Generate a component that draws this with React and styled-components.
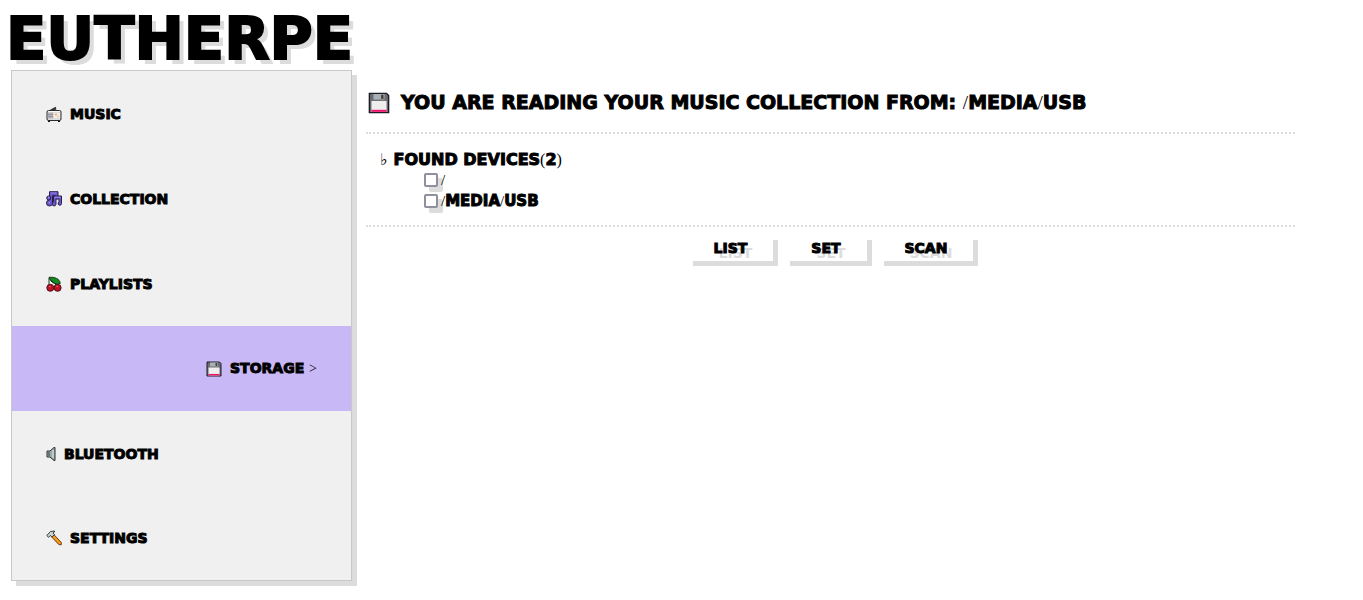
import React from 'react';
import styled, { createGlobalStyle } from 'styled-components';

const Global = createGlobalStyle`
  * { box-sizing: border-box; }
  body { margin: 0; background: #fff; color: #000; font-family: "DejaVu Sans", sans-serif; font-weight: 700; }
`;

const Page = styled.div`
  padding: 8px 8px 20px 11px;
`;

const Title = styled.h1`
  margin: 0 0 0 -5px;
  font-size: 59px;
  line-height: 62px;
  -webkit-text-stroke: 2px #000;
  text-shadow: 5px 5px #dcdcdc;
`;

const Columns = styled.div`
  display: flex;
  align-items: flex-start;
  gap: 14px;
`;

const Menu = styled.nav`
  flex: 0 0 calc(25% + 5px);
  display: flex;
  flex-direction: column;
  border: 1px solid #c8c8c8;
  background: #f0f0f0;
  box-shadow: 5px 5px #dcdcdc;
`;

const MenuLink = styled.a`
  display: flex;
  align-items: center;
  justify-content: ${p => (p.$active ? 'flex-end' : 'flex-start')};
  gap: 8px;
  height: 85px;
  padding: 0 34px;
  background: ${p => (p.$active ? '#c8b8f6' : 'transparent')};
  color: #000;
  font-size: 14px;
  line-height: 16px;
  -webkit-text-stroke: 1px #000;
  text-decoration: none;
  &:last-child { height: 84px; }
`;

const Icon = styled.svg`
  flex: none;
  display: block;
  overflow: visible;
`;

const Thin = styled.span`
  font-family: "Liberation Serif", serif;
  font-weight: 400;
  -webkit-text-stroke: 0;
`;

const Main = styled.main`
  flex: 1;
  min-width: 0;
  margin-right: 60px;
`;

const Heading = styled.h2`
  display: flex;
  align-items: center;
  gap: 11px;
  margin: 0;
  padding: 20px 2px 17px;
  font-size: 19px;
  line-height: 24px;
  -webkit-text-stroke: 1px #000;
`;

const Panel = styled.section`
  padding: 15px 14px 13px;
  border-top: 2px dotted #dcdcdc;
  border-bottom: 2px dotted #dcdcdc;
`;

const PanelTitle = styled.h3`
  margin: 0;
  font-size: 16px;
  line-height: 21px;
  -webkit-text-stroke: 1px #000;
`;

const Devices = styled.ul`
  margin: 0;
  padding: 0 0 0 44px;
  list-style: none;
`;

const Device = styled.li`
  height: 21px;
  font-size: 15px;
  line-height: 20px;
  -webkit-text-stroke: 1px #000;
`;

const DeviceLabel = styled.label`
  display: flex;
  align-items: center;
  gap: 3px;
`;

const Tick = styled.input`
  appearance: none;
  flex: none;
  width: 14px;
  height: 14px;
  margin: 0;
  border: 2px solid #8f8f9d;
  border-radius: 2px;
  background: #fff;
  box-shadow: 5px 5px #dcdcdc;
  &:checked { background: #8f8f9d; }
`;

const Actions = styled.div`
  display: flex;
  justify-content: center;
  gap: 12px;
  padding: 8px 0;
`;

const Action = styled.button`
  height: 26px;
  padding: 0 26px;
  border: 0;
  background: #fff;
  color: #000;
  font: 700 14px/26px "DejaVu Sans", sans-serif;
  -webkit-text-stroke: 1px #000;
  text-shadow: 5px 5px #dcdcdc;
  box-shadow: 5px 5px #dcdcdc;
`;

const Radio = () => (
  <Icon width="16" height="16" viewBox="0 0 16 16" aria-hidden="true">
    <path d="M4.500 4.500 10 1.500M7.500 4 10 2.500" stroke="#333" strokeWidth="1.6" fill="none" />
    <rect x="1" y="4.5" width="14" height="10" rx="1.5" fill="#dcdcdc" stroke="#2b2b33" />
    <path d="M2 5.500h12" stroke="#f6f6f6" />
    <path d="M2 6.500h5v6H2z" fill="#b4b4b8" />
    <path d="M2 8.500h5M2 10.500h5" stroke="#96969c" />
    <rect x="8" y="7" width="6" height="5" fill="#f2ece6" />
    <path d="M9 8.500h2M11.500 10.500h1" stroke="#f2a45a" strokeWidth="1.4" />
    <path d="M2 15.200h2M12 15.200h2" stroke="#111" strokeWidth="1.4" />
  </Icon>
);

const Notes = () => (
  <Icon width="16" height="16" viewBox="0 0 16 16" aria-hidden="true">
    <g fill="#6f58cb" stroke="#28204a" strokeWidth="1">
      <path d="M3.500.7h8.500v7H9V4.500H6.500V12a3 3 0 1 1-3-3z" />
      <circle cx="2.700" cy="7" r="2" />
      <path d="M7.500 5h8v7.500a1.700 1.700 0 1 1-2.500-1.500V8H10v5a1.900 1.900 0 1 1-2.500-1.800z" />
    </g>
    <circle cx="3.800" cy="12" r="2.300" fill="#6a55c4" />
    <path d="M4.500 2h6M8.500 6.300h6" stroke="#8f80e6" strokeWidth="1.200" />
    <path d="M2 6.500h1.500M2.500 11.500h1.500" stroke="#9c93ed" strokeWidth="1.500" />
  </Icon>
);

const Cherries = () => (
  <Icon width="16" height="16" viewBox="0 0 16 16" aria-hidden="true">
    <path d="M3 1.300C8 .8 14 2.500 14.200 7.500 9 8.500 5 7 3 1.300z" fill="#138a20" stroke="#143a18" />
    <path d="M3 2v8M4 3l7 7" stroke="#143a18" fill="none" />
    <circle cx="4.300" cy="11.800" r="3.500" fill="#bf1024" stroke="#4b1017" />
    <circle cx="11.600" cy="11.800" r="3.500" fill="#bf1024" stroke="#4b1017" />
    <path d="M3 10.500h1.500M10.500 10.500H12" stroke="#ef6972" />
  </Icon>
);

const Floppy = ({ size }) => (
  <Icon width={size} height={size} viewBox="0 0 16 16" aria-hidden="true">
    <path d="M1 1h12.500L15 2.500V15H1z" fill="#6c6c72" stroke="#1c1c24" />
    <path d="M4 1.500h8v4H4z" fill="#a9b1b8" />
    <path d="M9.500 2h1.800v3H9.500z" fill="#4a4038" />
    <path d="M2.500 6.500h11v8h-11z" fill="#eee" />
    <path d="M2.500 13.700h11" stroke="#f0126c" strokeWidth="1.500" />
  </Icon>
);

const Speaker = () => (
  <Icon width="10" height="16" viewBox="0 0 10 16" aria-hidden="true">
    <path d="M1 5h3l4-3.500h1v13H8L4 11H1z" fill="#9eaaaa" stroke="#293033" />
    <path d="M1.500 5.500h2.500v5H1.500z" fill="#66757a" />
    <path d="M7 4v8" stroke="#d3dcd5" strokeWidth="1.3" />
  </Icon>
);

const Hammer = () => (
  <Icon width="16" height="16" viewBox="0 0 16 16" aria-hidden="true">
    <path d="M5.500 6.700 7.800 4.500l7.500 8v2.200H13z" fill="#f29b18" stroke="#713b16" />
    <path d="M.8 5.500 4.500 1.500 8.500 1v1L7 3l1.500 1.700L5.800 7 4.500 5.500 2.500 7.200z" fill="#cbd3d3" stroke="#333a3c" />
  </Icon>
);

const items = [
  ['MUSIC', Radio],
  ['COLLECTION', Notes],
  ['PLAYLISTS', Cherries],
  ['STORAGE', Floppy],
  ['BLUETOOTH', Speaker],
  ['SETTINGS', Hammer],
];

export default function App() {
  return (
    <Page>
      <Global />
      <Title>EUTHERPE</Title>
      <Columns>
        <Menu>
          {items.map(([name, Glyph]) => (
            <MenuLink key={name} href="#" $active={name === 'STORAGE'}>
              <Glyph size={16} />
              <span>{name}{name === 'STORAGE' && <> <Thin>&gt;</Thin></>}</span>
            </MenuLink>
          ))}
        </Menu>
        <Main>
          <Heading>
            <Floppy size={22} />
            <span>YOU ARE READING YOUR MUSIC COLLECTION FROM: <Thin>/</Thin>MEDIA<Thin>/</Thin>USB</span>
          </Heading>
          <Panel>
            <PanelTitle><Thin>♭</Thin> FOUND DEVICES<Thin>(</Thin>2<Thin>)</Thin></PanelTitle>
            <Devices>
              <Device>
                <DeviceLabel><Tick type="checkbox" /><Thin>/</Thin></DeviceLabel>
              </Device>
              <Device>
                <DeviceLabel><Tick type="checkbox" /><span><Thin>/</Thin>MEDIA<Thin>/</Thin>USB</span></DeviceLabel>
              </Device>
            </Devices>
          </Panel>
          <Actions>
            <Action type="button">LIST</Action>
            <Action type="button">SET</Action>
            <Action type="button">SCAN</Action>
          </Actions>
        </Main>
      </Columns>
    </Page>
  );
}
